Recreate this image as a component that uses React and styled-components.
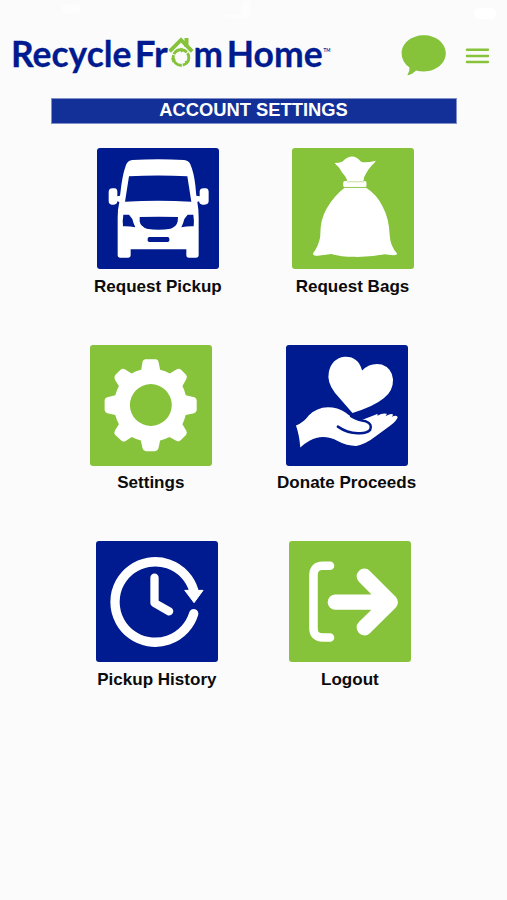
import React from "react";
import styled, { createGlobalStyle } from "styled-components";

const GREEN = "#86c33b";
const NAVY = "#001b8f";

const GlobalStyle = createGlobalStyle`
  * { box-sizing: border-box; }
  body {
    margin: 0;
    background: #fbfbfb;
    font-family: "Liberation Sans", Arial, sans-serif;
  }
`;

const Screen = styled.main`
  width: 507px;
  height: 900px;
  display: flex;
  flex-direction: column;
  overflow: hidden;
  background: #fbfbfb;
`;

const StatusBar = styled.svg`
  display: block;
  width: 507px;
  height: 24px;
  flex: none;
`;

const Header = styled.header`
  height: 74px;
  flex: none;
  display: flex;
  align-items: flex-start;
  padding-left: 10px;
`;

const Logo = styled.svg`
  display: block;
  width: 330px;
  height: 60px;
  margin-top: 6px;
`;

const IconButton = styled.button`
  padding: 0;
  border: 0;
  background: none;
  display: block;
  width: ${(p) => p.$width}px;
  height: ${(p) => p.$height}px;
  margin: ${(p) => p.$margin};
  svg { display: block; width: 100%; height: 100%; }
`;

const Banner = styled.h1`
  margin: 0 50px 0 51px;
  height: 26px;
  flex: none;
  display: flex;
  align-items: center;
  justify-content: center;
  padding: 0 1px 3px 0;
  border: 1px solid #8090c8;
  background: #123098;
  color: #fff;
  font-size: 18.35px;
  font-weight: 700;
  line-height: 22px;
`;

const Menu = styled.nav`
  display: flex;
  flex-direction: column;
  padding-top: 24.4px;
`;

const Row = styled.div`
  height: 196.4px;
  display: flex;
  gap: ${(p) => p.$gap}px;
  padding-left: ${(p) => p.$start}px;
`;

const MenuItem = styled.a`
  width: 122px;
  display: flex;
  flex-direction: column;
  align-items: center;
  color: #0b0b0d;
  text-decoration: none;
`;

const Tile = styled.span`
  display: block;
  width: 122px;
  height: 121px;
  border-radius: 3px;
  overflow: hidden;
  background: ${(p) => p.$color};
  svg { display: block; width: 100%; height: 100%; }
`;

const Label = styled.span`
  margin: 6.6px 1px 0 0;
  font-size: 17.05px;
  line-height: 21px;
  font-weight: 700;
  white-space: nowrap;
`;

const VanIcon = () => (
  <svg viewBox="38 25 366 363" fill="#fff">
    <path d="M144 61Q222 57 299 61Q313 62 318 74Q329 100 333 137L336 168L346 170V155Q347 146 357 146H364Q373 147 373 157V185Q372 195 361 195H354Q346 195 344 185L339 187Q343 208 343 235V346Q343 354 335 354H314Q306 354 306 346V329H139V346Q139 354 131 354H108Q100 354 100 346V235Q100 208 105 187L99 185Q98 195 89 195H82Q73 194 73 184V157Q73 147 84 146H91Q99 147 99 156V170L107 168L111 137Q116 100 125 76Q130 63 144 61Z" />
    <g fill={NAVY}>
      <path d="M134 110Q222 105 309 110L321 186Q222 181 122 186Z" />
      <path d="M166 232Q222 230 281 232L280 245Q277 261 259 267Q222 273 187 267Q168 260 166 245Z" />
      <path d="M117 225L134 225L144 238Q146 248 153 263Q134 259 116 260Q114 243 117 225Z" />
      <path d="M327 225L310 225L300 238Q298 248 291 263Q310 259 328 260Q330 243 327 225Z" />
      <rect x="190" y="292" width="65" height="15" rx="5" />
    </g>
  </svg>
);

const BagIcon = () => (
  <svg viewBox="35 25 367 363">
    <g fill="#fff">
      <path d="M163 70Q177 70 187 65Q202 50 216 50Q229 50 242 65Q253 71 287 63Q283 72 276 76Q266 87 259 99Q251 110 250 124H201Q199 112 186 99Q179 84 163 70Z" />
      <rect x="189" y="124" width="70" height="18" rx="5" />
      <path d="M193 144H258Q290 164 308 201Q327 236 329 288Q331 321 351 342Q352 347 340 347L313 344Q270 353 222 352Q181 352 154 343L113 349Q98 349 98 342Q115 320 120 291Q119 240 139 207Q160 170 193 144Z" />
    </g>
    <path d="M201 126H252M196 143H255" fill="none" stroke={GREEN} strokeWidth="1.5" />
  </svg>
);

const GearIcon = () => (
  <svg viewBox="30 28 367 363">
    <path
      fill="#fff"
      fillRule="evenodd"
      d="M196 70H228Q235 71 236 78L241 102Q257 106 270 113L290 101Q298 97 304 102L319 117Q324 123 319 131L308 151Q315 164 318 179L344 185Q350 187 351 194V223Q350 231 343 233L318 238Q314 253 308 266L320 286Q324 293 318 299L302 315Q296 320 288 315L269 304Q255 311 241 315L236 338Q234 346 226 347H198Q190 346 188 338L183 315Q169 311 156 304L137 316Q130 320 124 315L106 298Q101 292 105 285L117 266Q110 253 106 238L82 233Q75 231 74 223V194Q75 187 82 185L106 179Q110 164 117 151L105 132Q101 124 106 118L122 102Q128 97 136 101L155 113Q168 106 184 102L188 78Q190 71 196 70ZM213 145A63 63 0 1 0 213 271A63 63 0 1 0 213 145Z"
    />
  </svg>
);

const DonateIcon = () => (
  <svg viewBox="48 28 367 363">
    <g fill="#fff">
      <path d="M248 232L195 171Q170 139 177 108Q186 68 224 63Q265 61 277 104Q302 79 336 86Q367 97 370 131Q371 165 342 188Q312 213 248 232Z" />
      <path d="M78 270Q101 261 117 239Q140 216 174 215Q203 215 228 231Q247 249 276 253L317 237Q326 232 323 240Q339 231 350 234Q353 235 347 242Q365 232 369 236Q372 239 366 243Q383 237 384 245Q380 257 362 270L321 300Q287 327 259 331Q230 331 205 317Q159 293 120 315Q102 325 91 336Q88 298 78 270Z" />
    </g>
    <path d="M204 273Q231 292 264 293Q290 295 301 283Q309 265 288 257Q265 255 244 242" fill="none" stroke={NAVY} strokeWidth="7.5" strokeLinecap="round" strokeLinejoin="round" />
  </svg>
);

const HistoryIcon = () => (
  <svg viewBox="34 33 367 363">
    <g fill="none" stroke="#fff" strokeLinecap="round" strokeLinejoin="round">
      <path d="M328 251A121 121 0 1 1 328 181" strokeWidth="28" />
      <path d="M210 143V219L254 244" strokeWidth="25" />
    </g>
    <path d="M301 181H356L329 218Z" fill="#fff" stroke="#fff" strokeWidth="3" strokeLinejoin="round" />
  </svg>
);

const LogoutIcon = () => (
  <svg viewBox="27 33 369 366">
    <g fill="none" stroke="#fff" strokeLinecap="round" strokeLinejoin="round">
      <path d="M151 108H129Q101 108 101 137V296Q101 325 129 325H151" strokeWidth="26" />
      <path d="M167 218H300" strokeWidth="46" />
      <path d="M255 140L333 218L255 295" strokeWidth="47" />
    </g>
    <path d="M273 195H325V241H273Z" fill="#fff" />
  </svg>
);

const rows = [
  {
    start: 97.4,
    gap: 72.6,
    items: [
      { label: "Request Pickup", color: NAVY, Icon: VanIcon },
      { label: "Request Bags", color: GREEN, Icon: BagIcon },
    ],
  },
  {
    start: 90.3,
    gap: 73.8,
    items: [
      { label: "Settings", color: GREEN, Icon: GearIcon },
      { label: "Donate Proceeds", color: NAVY, Icon: DonateIcon },
    ],
  },
  {
    start: 96.4,
    gap: 71,
    items: [
      { label: "Pickup History", color: NAVY, Icon: HistoryIcon },
      { label: "Logout", color: GREEN, Icon: LogoutIcon },
    ],
  },
];

const BrandLogo = () => (
  <Logo viewBox="10 30 330 60" role="img" aria-label="Recycle From Home">
    <g fill={NAVY} stroke={NAVY} strokeWidth="0.3" fontFamily="Lato, sans-serif" fontWeight="700" fontSize="37">
      <text x="11" y="66.5" textLength="120.5" lengthAdjust="spacingAndGlyphs">Recycle</text>
      <text x="134.8" y="66.5" textLength="33" lengthAdjust="spacingAndGlyphs">Fr</text>
      <text x="193.6" y="66.5" textLength="29.5" lengthAdjust="spacingAndGlyphs">m</text>
      <text x="226.8" y="66.5" textLength="95.8" lengthAdjust="spacingAndGlyphs">Home</text>
    </g>
    <text x="323.6" y="51.8" fill={NAVY} fontFamily="Lato, sans-serif" fontWeight="700" fontSize="5.5" textLength="6.8" lengthAdjust="spacingAndGlyphs">TM</text>
    <path d="M169.6 51.3L181 40L192.2 51.3" fill="none" stroke={GREEN} strokeWidth="3.8" />
    <path d="M184.5 38H188.5V47H184.5Z" fill={GREEN} />
    <circle cx="181" cy="57.5" r="7.8" fill="none" stroke={GREEN} strokeWidth="2.9" strokeDasharray="15.4 0.936" strokeDashoffset="5" />
    <path d="M180.5 47.5L184.5 50L181 52.8ZM171 58L176 59.5L172.5 62.5ZM190 60.5L187 64.5L184.5 61Z" fill={GREEN} />
  </Logo>
);

export default function App() {
  return (
    <>
      <GlobalStyle />
      <Screen>
        <StatusBar viewBox="0 0 507 24" fill="#fff" aria-hidden="true">
          <rect x="62" y="4" width="18" height="9" rx="4" opacity=".6" />
          <path d="M225 15H240L243 1H250V18H225Z" opacity=".6" />
          <rect x="474" y="8" width="22" height="11" rx="5" />
        </StatusBar>
        <Header>
          <BrandLogo />
          <IconButton $width={46} $height={42} $margin="11px 0 0 61px" aria-label="Messages">
            <svg viewBox="401 35 46 42">
              <path d="M424 35.2C436 35.2 445.8 43.2 445.8 53.3C445.8 63.4 436 71.5 424 71.5Q419.5 71.5 416 70.4Q412.3 74.5 407.3 75.3Q410 71.5 409.5 67.5Q401.6 62 401.6 53.3C401.6 43.2 411.5 35.2 424 35.2Z" fill={GREEN} />
            </svg>
          </IconButton>
          <IconButton $width={24} $height={18} $margin="23px 0 0 18px" aria-label="Menu">
            <svg viewBox="465 47 24 18">
              <path d="M467 49.7H488M467 55.9H488M467 62H488" stroke={GREEN} strokeWidth="2.5" strokeLinecap="round" />
            </svg>
          </IconButton>
        </Header>
        <Banner>ACCOUNT SETTINGS</Banner>
        <Menu>
          {rows.map(({ start, gap, items }) => (
            <Row key={start} $start={start} $gap={gap}>
              {items.map(({ label, color, Icon }) => (
                <MenuItem key={label}>
                  <Tile $color={color}>
                    <Icon />
                  </Tile>
                  <Label>{label}</Label>
                </MenuItem>
              ))}
            </Row>
          ))}
        </Menu>
      </Screen>
    </>
  );
}
